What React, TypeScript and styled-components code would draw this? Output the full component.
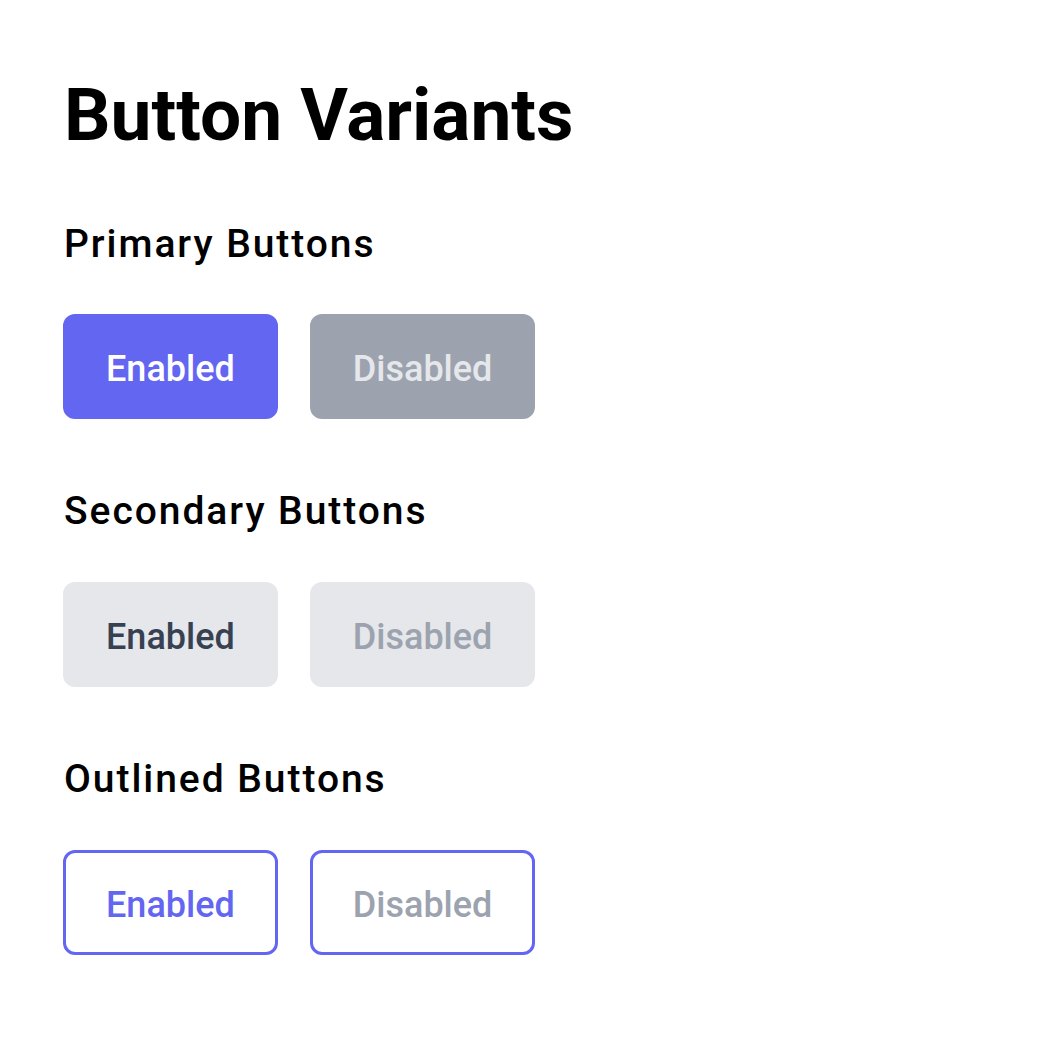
import React from "react";
import styled, { createGlobalStyle, css } from "styled-components";

const GlobalStyle = createGlobalStyle`
  html, body { margin: 0; padding: 0; background: #ffffff; }
  body { font-family: Roboto, "Liberation Sans", Arial, sans-serif; color: #000000; }
`;

const Page = styled.main`
  padding: 72px 63px;
  display: flex;
  flex-direction: column;
`;

const Title = styled.h1`
  margin: 0 0 61px 1px;
  font-size: 73px;
  font-weight: 700;
  line-height: 1.2;
`;

const Section = styled.section`
  display: flex;
  flex-direction: column;
  gap: 47px;
  margin-bottom: 69px;
`;

const Heading = styled.h2`
  margin: 0 0 0 1px;
  font-size: 39px;
  font-weight: 500;
  letter-spacing: 0.05em;
  line-height: 1.2;
`;

const Row = styled.div`
  display: flex;
  gap: 32px;
`;

type Variant = "primary" | "secondary" | "outlined";

const variants = {
  primary: css<{ disabled?: boolean }>`
    background: ${(p) => (p.disabled ? "#9CA3AF" : "#6366F1")};
    border-color: ${(p) => (p.disabled ? "#9CA3AF" : "#6366F1")};
    color: ${(p) => (p.disabled ? "#E5E7EB" : "#ffffff")};
  `,
  secondary: css<{ disabled?: boolean }>`
    background: #E5E7EB;
    border-color: #E5E7EB;
    color: ${(p) => (p.disabled ? "#9CA3AF" : "#374151")};
  `,
  outlined: css<{ disabled?: boolean }>`
    background: #ffffff;
    border-color: #6366F1;
    color: ${(p) => (p.disabled ? "#9CA3AF" : "#6366F1")};
  `,
};

const Button = styled.button<{ $variant: Variant }>`
  box-sizing: border-box;
  height: 105px;
  padding: 5px 40px 0;
  border: 3px solid transparent;
  border-radius: 12px;
  font-family: Roboto, "Liberation Sans", Arial, sans-serif;
  font-size: 36px;
  font-weight: 500;
  line-height: 1;
  cursor: pointer;
  ${(p) => variants[p.$variant]}
  &:disabled { cursor: not-allowed; }
`;

const groups: { title: string; variant: Variant }[] = [
  { title: "Primary Buttons", variant: "primary" },
  { title: "Secondary Buttons", variant: "secondary" },
  { title: "Outlined Buttons", variant: "outlined" },
];

export default function App() {
  return (
    <>
      <GlobalStyle />
      <Page>
        <Title>Button Variants</Title>
        {groups.map((g) => (
          <Section key={g.title}>
            <Heading>{g.title}</Heading>
            <Row>
              <Button $variant={g.variant}>Enabled</Button>
              <Button $variant={g.variant} disabled>
                Disabled
              </Button>
            </Row>
          </Section>
        ))}
      </Page>
    </>
  );
}
